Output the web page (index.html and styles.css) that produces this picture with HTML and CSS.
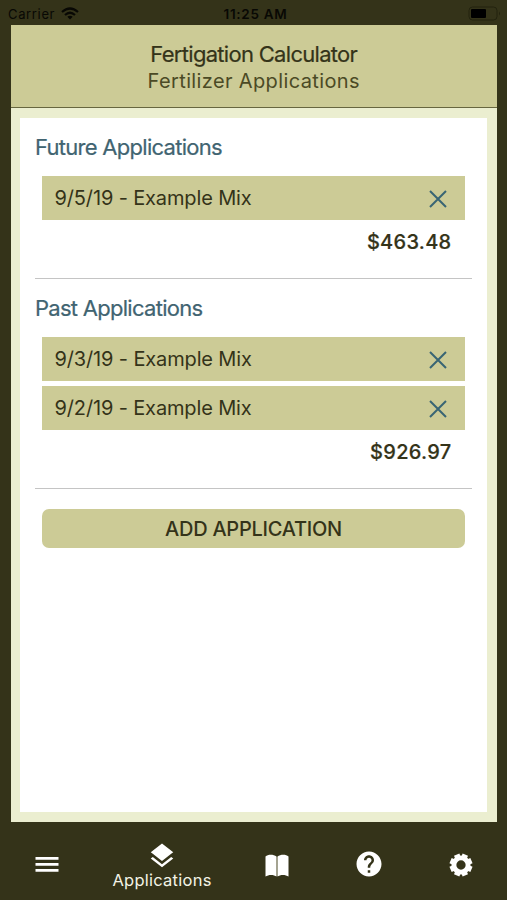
FILE: index.html
```html
<!DOCTYPE html>
<html lang="en">
<head>
<meta charset="utf-8">
<title>Fertigation Calculator</title>
<link rel="stylesheet" href="styles.css">
</head>
<body>
<div class="status">
  <div class="carrier"><span>Carrier</span>
    <svg width="18" height="13" viewBox="0 0 18 13"><g fill="none" stroke="#080804" stroke-width="2.2"><path d="M1 5 Q9 -2 17 5"/><path d="M4 8 Q9 3.5 14 8"/></g><path d="M6.3 9.8 Q9 7.7 11.7 9.8 L9 12.6Z" fill="#080804"/></svg>
  </div>
  <time class="clock">11:25 AM</time>
  <svg class="battery" width="34" height="15" viewBox="0 0 34 15"><rect x="1" y="1" width="28" height="13" rx="3.5" fill="none" stroke="#23230f"/><rect x="3" y="3" width="15" height="9" rx="1" fill="#000"/><path d="M31 5.5q2 2 0 4z" fill="#23230f"/></svg>
</div>
<main class="frame">
  <header class="header">
    <h1 class="title">Fertigation Calculator</h1>
    <p class="subtitle">Fertilizer Applications</p>
  </header>
  <div class="panel">
    <section class="group">
      <h2 class="heading">Future Applications</h2>
      <ul class="list">
        <li class="row"><span class="name">9/5/19 - Example Mix</span><svg class="close" viewBox="0 0 18 18"><path d="M1 1 17 17M17 1 1 17"/></svg></li>
      </ul>
      <p class="total">$463.48</p>
    </section>
    <section class="group">
      <h2 class="heading">Past Applications</h2>
      <ul class="list">
        <li class="row"><span class="name">9/3/19 - Example Mix</span><svg class="close" viewBox="0 0 18 18"><path d="M1 1 17 17M17 1 1 17"/></svg></li>
        <li class="row"><span class="name">9/2/19 - Example Mix</span><svg class="close" viewBox="0 0 18 18"><path d="M1 1 17 17M17 1 1 17"/></svg></li>
      </ul>
      <p class="total">$926.97</p>
    </section>
    <button class="add" type="button">ADD APPLICATION</button>
  </div>
</main>
<nav class="tabs">
  <a class="tab menu"><svg width="24" height="17" viewBox="0 0 24 17"><path d="M.5 1h23v2.8H.5zM.5 7h23v2.8H.5zM.5 13h23v2.8H.5z"/></svg></a>
  <a class="tab active"><svg width="30" height="30" viewBox="0 0 24 24"><path d="m11.99 18.54-7.37-5.73L3 14.07l9 7 9-7-1.63-1.27-7.38 5.74zM12 16l7.36-5.73L21 9l-9-7-9 7 1.63 1.27L12 16z"/></svg><span class="label">Applications</span></a>
  <a class="tab"><svg width="24" height="24" viewBox="0 0 24 24"><path d="M11.5 2.6C8.5.3 3 .2.5 2.6V22.6c3-2.2 8.5-2 11 0zM12.5 2.6c3-2.3 8.5-2.4 11 0V22.6c-3-2.2-8.5-2-11 0z"/><path d="M11.3 3h1.4v19h-1.4z" fill="#aaa995"/></svg></a>
  <a class="tab help"><svg width="30" height="30" viewBox="0 0 24 24"><path d="M12 2C6.48 2 2 6.48 2 12s4.48 10 10 10 10-4.48 10-10S17.52 2 12 2zm1 17h-2v-2h2v2zm2.07-7.75-.9.92C13.45 12.9 13 13.5 13 15h-2v-.5c0-1.1.45-2.1 1.17-2.83l1.24-1.26c.37-.36.59-.86.59-1.41 0-1.1-.9-2-2-2s-2 .9-2 2H8c0-2.21 1.79-4 4-4s4 1.79 4 4c0 .88-.36 1.68-.93 2.25z"/></svg></a>
  <a class="tab gear"><svg width="24" height="24" viewBox="-12 -12 24 24"><g stroke="#fff" stroke-width="5.8" transform="rotate(22.5)"><path d="M0-11.3V-7M0 11.3V7M-11.3 0H-7M11.3 0H7"/><path d="M0-11.3V-7M0 11.3V7M-11.3 0H-7M11.3 0H7" transform="rotate(45)"/></g><circle r="7.1" fill="none" stroke="#fff" stroke-width="4.9"/></svg></a>
</nav>
</body>
</html>
```

FILE: styles.css
```css
* { box-sizing: border-box; }
body {
  margin: 0;
  height: 900px;
  display: flex;
  flex-direction: column;
  background: #343319;
  color: #343319;
  font-family: Inter, "Liberation Sans", sans-serif;
  overflow: hidden;
}
h1, h2, p, ul { margin: 0; padding: 0; font-weight: 400; }
.status {
  height: 25px;
  flex: none;
  display: grid;
  grid-template-columns: 1fr auto 1fr;
  align-items: center;
  padding: 2px 5px 0 8px;
  color: #080804;
  font-size: 13px;
}
.carrier { display: flex; align-items: center; gap: 6px; letter-spacing: .65px; }
.clock { font-size: 13.5px; font-weight: 600; letter-spacing: .7px; margin-left: 1px; }
.battery { justify-self: end; }
.frame {
  width: 486.5px;
  height: 797px;
  flex: none;
  margin-left: 10.5px;
  display: flex;
  flex-direction: column;
  background: #ebeed0;
}
.header {
  height: 83px;
  flex: none;
  padding-top: 15px;
  background: #cccb96;
  border-bottom: 1.5px solid #67663f;
  text-align: center;
}
.title { font-size: 22px; line-height: 28px; letter-spacing: -.7px; -webkit-text-stroke: .2px; }
.subtitle { font-size: 20px; line-height: 27px; letter-spacing: .37px; color: #4b4a25; }
.panel {
  flex: 1;
  margin: 10px 10px 10px 9.5px;
  padding: 0 15px;
  background: #fff;
}
.group { height: 161px; border-bottom: 1.5px solid #c4c4c4; }
.group + .group { height: 210px; }
.heading {
  padding-top: 15px;
  height: 58px;
  color: #416471;
  font-size: 22px;
  line-height: 28px;
  letter-spacing: -.72px;
  -webkit-text-stroke: .2px;
}
.list { list-style: none; margin: 0 7px; display: grid; gap: 5.5px; }
.row {
  height: 43.5px;
  display: flex;
  align-items: center;
  justify-content: space-between;
  padding: 0 18px 0 12.5px;
  background: #cccb96;
}
.name { font-size: 20px; letter-spacing: -.14px; }
.close { width: 18px; height: 18px; margin-top: 3px; fill: none; stroke: #386574; stroke-width: 2; }
.total { margin: 9px 20.5px 0 0; text-align: right; font-size: 20px; line-height: 26px; font-weight: 500; letter-spacing: .3px; -webkit-text-stroke: .2px; }
.add {
  display: block;
  width: calc(100% - 14px);
  height: 39px;
  margin: 20px 7px 0;
  padding: 1px 0 0;
  border: 0;
  border-radius: 7px;
  background: #cccb96;
  color: #343319;
  font: 500 20px/38px Inter, "Liberation Sans", sans-serif;
  letter-spacing: -.25px;
}
.tabs {
  flex: 1;
  display: grid;
  grid-template-columns: 92px 138px 92px 92px 92px;
  padding-left: 1px;
  color: #fff;
}
.tab { display: flex; flex-direction: column; align-items: center; justify-content: center; padding-top: 9px; }
.tab svg { fill: currentColor; }
.menu, .help { padding-top: 6px; }
.gear { padding-top: 8px; }
.active { justify-content: flex-start; padding-top: 19px; }
.label { font-size: 16.5px; line-height: 18px; letter-spacing: .25px; color: #f3f3e6; }
```
